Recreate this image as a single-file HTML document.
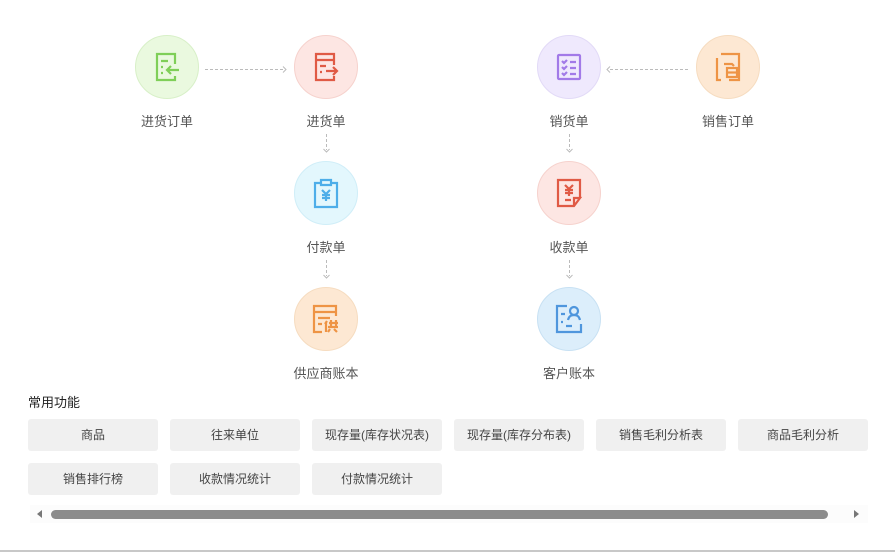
<!DOCTYPE html>
<html><head><meta charset="utf-8"><style>
*{margin:0;padding:0;box-sizing:border-box}
body{width:895px;height:554px;background:#fff;position:relative;overflow:hidden;font-family:"Liberation Sans","Noto Sans CJK SC",sans-serif;color:#555}
.c{position:absolute;width:64px;height:64px;border-radius:50%;display:flex;align-items:center;justify-content:center}
.l{position:absolute;width:120px;text-align:center;font-size:13px;color:#555}
.b{position:absolute;width:130px;height:32px;background:#f0f0f0;border-radius:3px;font-size:12px;color:#444;text-align:center;line-height:32px}
svg{overflow:visible}
</style></head><body>
<!-- circles -->
<div class="c" style="left:135px;top:35px;background:#eaf9df;border:1px solid #d8f0c8">
<svg width="28" height="30" fill="none" stroke="#7fcf58" stroke-width="2.2"><path d="M22 12V2H4v26h18v-4"/><path d="M8 9h7M8 15h2M8 21h2M26 18H14M18 14l-4 4 4 4"/></svg></div>
<div class="c" style="left:294px;top:35px;background:#fde6e3;border:1px solid #f6d2cd">
<svg width="28" height="30" fill="none" stroke="#e05a45" stroke-width="2.2"><path d="M22 13V2H4v26h18v-4M4 8h18"/><path d="M8 14h6M8 20h2M14 19h10M21 15l4 4-4 4"/></svg></div>
<div class="c" style="left:537px;top:35px;background:#efe9fd;border:1px solid #e2daf7">
<svg width="26" height="28" fill="none" stroke="#a27ae8" stroke-width="2.2"><rect x="2" y="2" width="22" height="24" rx="1"/><path d="M6 8l2 2 3-3M6 14l2 2 3-3M6 20l2 2 3-3M14 9h6M14 15h6M14 21h6"/></svg></div>
<div class="c" style="left:696px;top:35px;background:#fde8d3;border:1px solid #f6dcc0">
<svg width="26" height="30" fill="none" stroke="#ee9445" stroke-width="2.2"><path d="M6 2h18v26H14M2 6v22h4"/><path d="M9 12h8l2 2"/><rect x="12" y="16" width="10" height="9"/><path d="M12 20.5h10"/></svg></div>
<div class="c" style="left:294px;top:161px;background:#e3f7fd;border:1px solid #d0eef8">
<svg width="26" height="30" fill="none" stroke="#4eaee9" stroke-width="2.2"><path d="M8 5H2v24h22V5h-6M8 2h10v5H8z"/><path d="M9 12l4 4 4-4M13 16v7M9 17h8M9 20h8"/></svg></div>
<div class="c" style="left:537px;top:161px;background:#fde6e3;border:1px solid #f6d2cd">
<svg width="26" height="30" fill="none" stroke="#e05a45" stroke-width="2.2"><path d="M24 20V2H2v26h16l6-8h-6v8"/><path d="M9 7l4 4 4-4M13 11v7M9 12h8M9 15h8M9 22h6"/></svg></div>
<div class="c" style="left:294px;top:287px;background:#fde8d3;border:1px solid #f6dcc0">
<svg width="28" height="30" fill="none" stroke="#ee9445" stroke-width="2.2"><path d="M24 12V2H2v26h8M2 8h22M6 14h12M6 20h4"/><path d="M14 18v10M13 20l2-3M17 19h9M19 16v7M24 16v7M16 23h10M18 25l-2 3M22 25l3 3"/></svg></div>
<div class="c" style="left:537px;top:287px;background:#dceefb;border:1px solid #c8e1f3">
<svg width="28" height="30" fill="none" stroke="#4f96dd" stroke-width="2.2"><path d="M12 2H2v26h24v-8"/><circle cx="19" cy="7" r="4"/><path d="M13 16c1-4 3-5 6-5s5 1 6 5M6 10h4M6 18h2M11 22h6"/></svg></div>
<!-- connectors -->
<svg style="position:absolute;left:0;top:0" width="895" height="554" fill="none" stroke="#bbb" stroke-width="1">
<path d="M205 69.5h80" stroke-dasharray="3 2"/><path d="M283 66.5l3 3-3 3"/>
<path d="M688 69.5h-80" stroke-dasharray="3 2"/><path d="M610 66.5l-3 3 3 3"/>
<path d="M326.5 134v16" stroke-dasharray="3 2"/><path d="M323.5 149l3 3 3-3"/>
<path d="M569.5 134v16" stroke-dasharray="3 2"/><path d="M566.5 149l3 3 3-3"/>
<path d="M326.5 260v16" stroke-dasharray="3 2"/><path d="M323.5 275l3 3 3-3"/>
<path d="M569.5 260v16" stroke-dasharray="3 2"/><path d="M566.5 275l3 3 3-3"/>
</svg>
<!-- labels -->
<div class="l" style="left:107px;top:111px">进货订单</div>
<div class="l" style="left:266px;top:111px">进货单</div>
<div class="l" style="left:509px;top:111px">销货单</div>
<div class="l" style="left:668px;top:111px">销售订单</div>
<div class="l" style="left:266px;top:237px">付款单</div>
<div class="l" style="left:509px;top:237px">收款单</div>
<div class="l" style="left:266px;top:363px">供应商账本</div>
<div class="l" style="left:509px;top:363px">客户账本</div>
<div style="position:absolute;left:28px;top:392px;font-size:13px;color:#222">常用功能</div>
<div class="b" style="left:28px;top:419px">商品</div>
<div class="b" style="left:170px;top:419px">往来单位</div>
<div class="b" style="left:312px;top:419px">现存量(库存状况表)</div>
<div class="b" style="left:454px;top:419px">现存量(库存分布表)</div>
<div class="b" style="left:596px;top:419px">销售毛利分析表</div>
<div class="b" style="left:738px;top:419px">商品毛利分析</div>
<div class="b" style="left:28px;top:463px">销售排行榜</div>
<div class="b" style="left:170px;top:463px">收款情况统计</div>
<div class="b" style="left:312px;top:463px">付款情况统计</div>
<!-- scrollbar -->
<div style="position:absolute;left:30px;top:505px;width:838px;height:18px;background:#fcfcfc"></div>
<div style="position:absolute;left:37px;top:510px;width:0;height:0;border-top:4px solid transparent;border-bottom:4px solid transparent;border-right:5px solid #777"></div>
<div style="position:absolute;left:854px;top:510px;width:0;height:0;border-top:4px solid transparent;border-bottom:4px solid transparent;border-left:5px solid #777"></div>
<div style="position:absolute;left:51px;top:510px;width:777px;height:9px;background:#8c8c8c;border-radius:5px"></div>
<div style="position:absolute;left:0;top:550px;width:895px;height:2px;background:#c8c8c8"></div>
</body></html>
